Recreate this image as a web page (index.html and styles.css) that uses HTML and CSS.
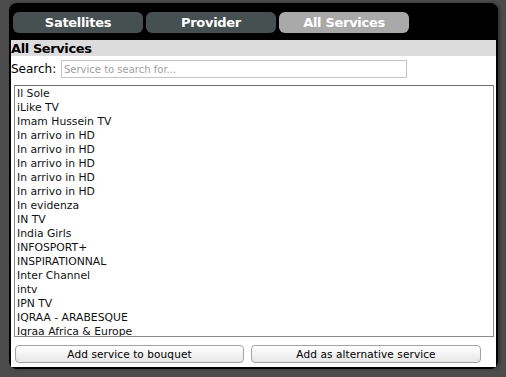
FILE: index.html
```html
<!DOCTYPE html>
<html>
<head>
    <title>All Services</title>
    <link rel="stylesheet" href="styles.css">
</head>
<body>
    <div id="panel">
        <div id="tabs">
            <div class="tab">Satellites</div>
            <div class="tab">Provider</div>
            <div class="tab active">All Services</div>
        </div>

        <div id="content">
            <div class="heading">All Services</div>
            <div class="search-row">
                <label for="search">Search:</label>
                <input type="text" id="search" placeholder="Service to search for...">
            </div>

            <div id="service-list">
                <div class="item">Il Sole</div>
                <div class="item">iLike TV</div>
                <div class="item">Imam Hussein TV</div>
                <div class="item">In arrivo in HD</div>
                <div class="item">In arrivo in HD</div>
                <div class="item">In arrivo in HD</div>
                <div class="item">In arrivo in HD</div>
                <div class="item">In arrivo in HD</div>
                <div class="item">In evidenza</div>
                <div class="item">IN TV</div>
                <div class="item">India Girls</div>
                <div class="item">INFOSPORT+</div>
                <div class="item">INSPIRATIONNAL</div>
                <div class="item">Inter Channel</div>
                <div class="item">intv</div>
                <div class="item">IPN TV</div>
                <div class="item">IQRAA - ARABESQUE</div>
                <div class="item">Iqraa Africa &amp; Europe</div>
            </div>

            <div class="actions">
                <button class="left">Add service to bouquet</button>
                <button class="right">Add as alternative service</button>
            </div>
        </div>
    </div>
</body>
</html>
```

FILE: styles.css
```css
body {
    margin: 0;
    padding: 3px 0 0 9px;
    background-color: #4b4b4b;
    font-family: "DejaVu Sans", Verdana, sans-serif;
    height: 374px;
    overflow: hidden;
}

#panel {
    width: 489px;
    height: 366px;
    background: #000;
    border-radius: 8px;
    box-sizing: border-box;
    padding: 0 2px 2px 2px;
    display: flex;
    flex-direction: column;
    box-shadow: 2px 0 3px rgba(0,0,0,0.35);
}

#tabs {
    display: flex;
    gap: 3px;
    padding: 9px 0 0 2px;
    height: 37px;
    box-sizing: border-box;
}

.tab {
    width: 130px;
    height: 21px;
    line-height: 21px;
    text-align: center;
    background: #475050;
    color: #fff;
    font-weight: bold;
    font-size: 13px;
    letter-spacing: -0.3px;
    border-radius: 6px;
}

.tab.active {
    background: #a9a9a9;
}

#content {
    flex: 1;
    background: #fff;
    display: flex;
    flex-direction: column;
}

.heading {
    background: #dcdcdc;
    height: 16px;
    line-height: 17px;
    font-weight: bold;
    font-size: 13px;
    letter-spacing: -0.4px;
    color: #000;
}

.search-row {
    display: flex;
    align-items: center;
    height: 24px;
    padding-top: 2px;
    box-sizing: border-box;
}

.search-row label {
    font-size: 12px;
    width: 50px;
}

.search-row input {
    width: 346px;
    height: 18px;
    box-sizing: border-box;
    border: 1px solid #c4c4c4;
    padding: 0 2px;
    font-family: "DejaVu Sans", Verdana, sans-serif;
    font-size: 10px;
    outline: none;
}

.search-row input::placeholder {
    color: #a0a0a0;
}

#service-list {
    margin: 5px 0 0 3px;
    width: 480px;
    height: 252px;
    box-sizing: border-box;
    border: 1px solid #8a8a8a;
    border-top-color: #6f6f6f;
    padding: 1px 0 0 2px;
    overflow: hidden;
}

.item {
    font-size: 10.8px;
    line-height: 14px;
    color: #111;
    white-space: nowrap;
}

.actions {
    display: flex;
    gap: 7px;
    padding: 8px 0 0 4px;
}

button {
    height: 18px;
    padding: 0;
    font-family: "DejaVu Sans", Verdana, sans-serif;
    font-size: 10.5px;
    letter-spacing: 0.1px;
    color: #000;
    background: linear-gradient(#ffffff, #f3f3f3 50%, #e6e6e6);
    border: 1px solid #a3a3a3;
    border-radius: 4px;
}

button.left {
    width: 229px;
}

button.right {
    width: 230px;
}
```
